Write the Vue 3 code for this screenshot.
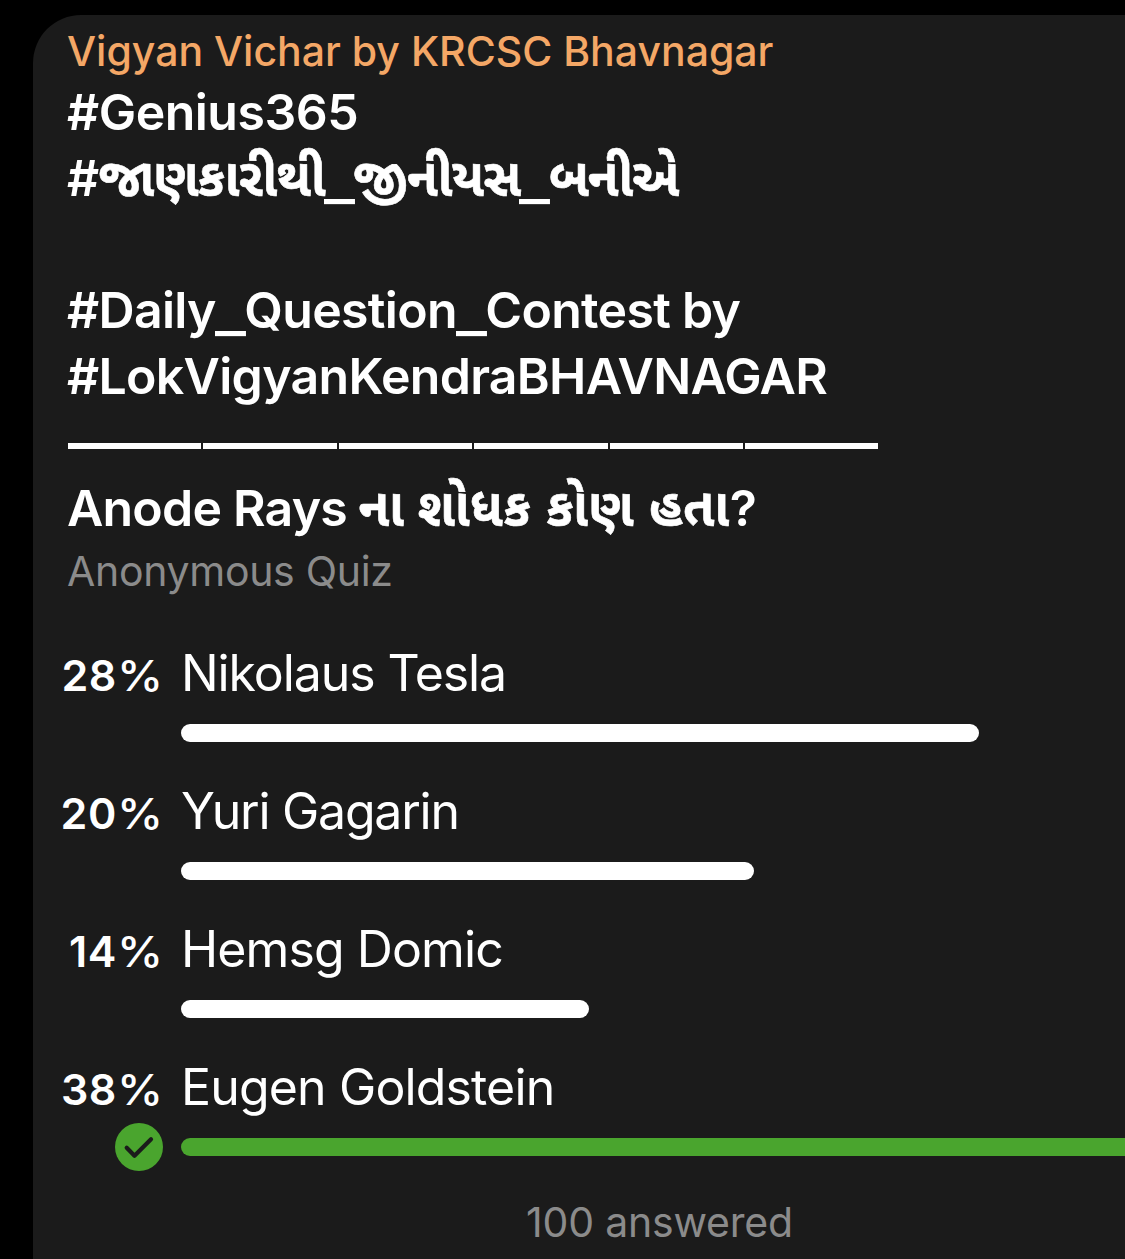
<template>
  <main class="chat">
    <article class="bubble">
      <header class="channel">Vigyan Vichar by KRCSC Bhavnagar</header>
      <h1 class="question">
        <template v-for="(line, i) in lines" :key="i">
          <span v-if="line.rule" class="rule"><i v-for="n in 6" :key="n"></i></span>
          <span v-else class="line" :style="{ letterSpacing: line.tracking + 'px' }"
            ><span v-for="(part, j) in split(line.text)" :key="j" :class="part.type">{{ part.text }}</span></span
          >
        </template>
      </h1>
      <p class="kind">Anonymous Quiz</p>
      <ul class="options">
        <li v-for="option in options" :key="option.name" class="option">
          <span class="percent">{{ option.percent }}<span class="sign">%</span></span>
          <span class="name" :style="{ letterSpacing: option.tracking + 'px' }">{{ option.name }}</span>
          <span class="mark">
            <svg v-if="option.correct" viewBox="0 0 48 48" width="48" height="48">
              <circle cx="24" cy="24" r="24" fill="#4aa52e" />
              <path
                d="M11.700 24.700L19.500 32.700L36 16.200"
                fill="none"
                stroke="#1b1b1b"
                stroke-width="4.200"
                stroke-linecap="round"
                stroke-linejoin="round"
              />
            </svg>
          </span>
          <span class="bar" :class="{ correct: option.correct }" :style="{ width: option.width + 'px' }"></span>
        </li>
      </ul>
      <footer class="answered">100 answered</footer>
    </article>
  </main>
</template>

<script setup>
const lines = [
  { text: '#Genius365', tracking: -0.5 },
  { text: '#જાણકારીથી_જીનીયસ_બનીએ', tracking: -0.7 },
  { text: '', tracking: 0 },
  { text: '#Daily_Question_Contest by', tracking: -0.7 },
  { text: '#LokVigyanKendraBHAVNAGAR', tracking: -0.7 },
  { rule: true },
  { text: 'Anode Rays ના શોધક કોણ હતા?', tracking: -0.8 },
]

const options = [
  { percent: 28, name: 'Nikolaus Tesla', width: 798, tracking: -1.1 },
  { percent: 20, name: 'Yuri Gagarin', width: 573, tracking: -1.25 },
  { percent: 14, name: 'Hemsg Domic', width: 408, tracking: -0.9 },
  { percent: 38, name: 'Eugen Goldstein', width: 1080, tracking: -0.85, correct: true },
]

const typeOf = (part) => {
  if (part === '_') return 'underscore'
  if (part === ' ') return 'gap'
  return /[\u0A80-\u0AFF]/.test(part) ? 'gujarati' : 'latin'
}

// Gujarati words and underscores get their own shape, the rest stays plain
const split = (text) =>
  (text.match(/_|[\u0A80-\u0AFF]+|[^_\u0A80-\u0AFF]+/g) || []).map((part) => ({
    text: part,
    type: typeOf(part),
  }))
</script>

<style>
body {
  background: #000;
}
</style>

<style scoped>
.chat {
  box-sizing: border-box;
  height: 1259px;
  padding: 15px 0 0 33px;
  overflow: hidden;
  background: #000;
  font-family: Inter, 'Noto Sans Gujarati', 'Noto Sans', sans-serif;
  color: #fff;
}

.bubble {
  box-sizing: border-box;
  height: 1244px;
  padding: 6px 0 0 34px;
  border-top-left-radius: 48px;
  background: #1b1b1b;
  white-space: nowrap;
}

.channel {
  height: 58px;
  line-height: 60px;
  font-size: 41px;
  font-weight: 500;
  color: #f4a766;
}

.question {
  margin: 0;
  font-size: 50px;
  font-weight: 600;
}

.line {
  display: block;
  height: 66px;
  line-height: 66px;
  white-space: pre;
}

.gujarati {
  display: inline-block;
  font-weight: 700;
  transform: scaleY(1.07);
  transform-origin: 0 50px;
  -webkit-text-stroke: 0.6px #fff;
}

/* words of the Gujarati sentence sit further apart */
.gap {
  word-spacing: 3px;
}

.gap + .gujarati {
  letter-spacing: 0.8px;
}

.underscore {
  display: inline-block;
  width: 31px;
  margin: 0 -1.5px 0 -1px;
  transform: translateY(3px) scaleX(1.32);
  transform-origin: 0 50%;
}

.rule {
  box-sizing: border-box;
  display: flex;
  gap: 2px;
  height: 66px;
  padding: 7px 0 0 1px;
  align-items: center;
}

.rule i {
  width: 133.4px;
  height: 6px;
  background: #fff;
}

.kind {
  height: 60px;
  margin: 0;
  line-height: 60px;
  font-size: 41px;
  letter-spacing: -0.3px;
  color: #8b8b8b;
}

.options {
  margin: 33px 0 0 -7px;
  padding: 0;
  list-style: none;
}

.option {
  display: grid;
  grid-template: 78px 60px / 99px 1080px;
  column-gap: 22px;
}

.percent {
  margin-right: -1px;
  line-height: 82px;
  text-align: right;
  font-size: 43px;
  font-weight: 600;
  letter-spacing: 0.5px;
}

.sign {
  display: inline-block;
  font-weight: 500;
  transform: scaleX(1.08);
  transform-origin: 0 50%;
}

.name {
  line-height: 78px;
  font-size: 50px;
}

.mark {
  display: flex;
  justify-content: flex-end;
  margin: -3px -4px 0 0;
}

.bar {
  height: 18px;
  margin-top: 12px;
  border-radius: 9px;
  background: #fff;
}

.bar.correct {
  background: #4aa52e;
}

.answered {
  margin-top: 11px;
  padding-left: 459px;
  font-size: 41px;
  letter-spacing: -0.2px;
  color: #8b8b8b;
}
</style>
